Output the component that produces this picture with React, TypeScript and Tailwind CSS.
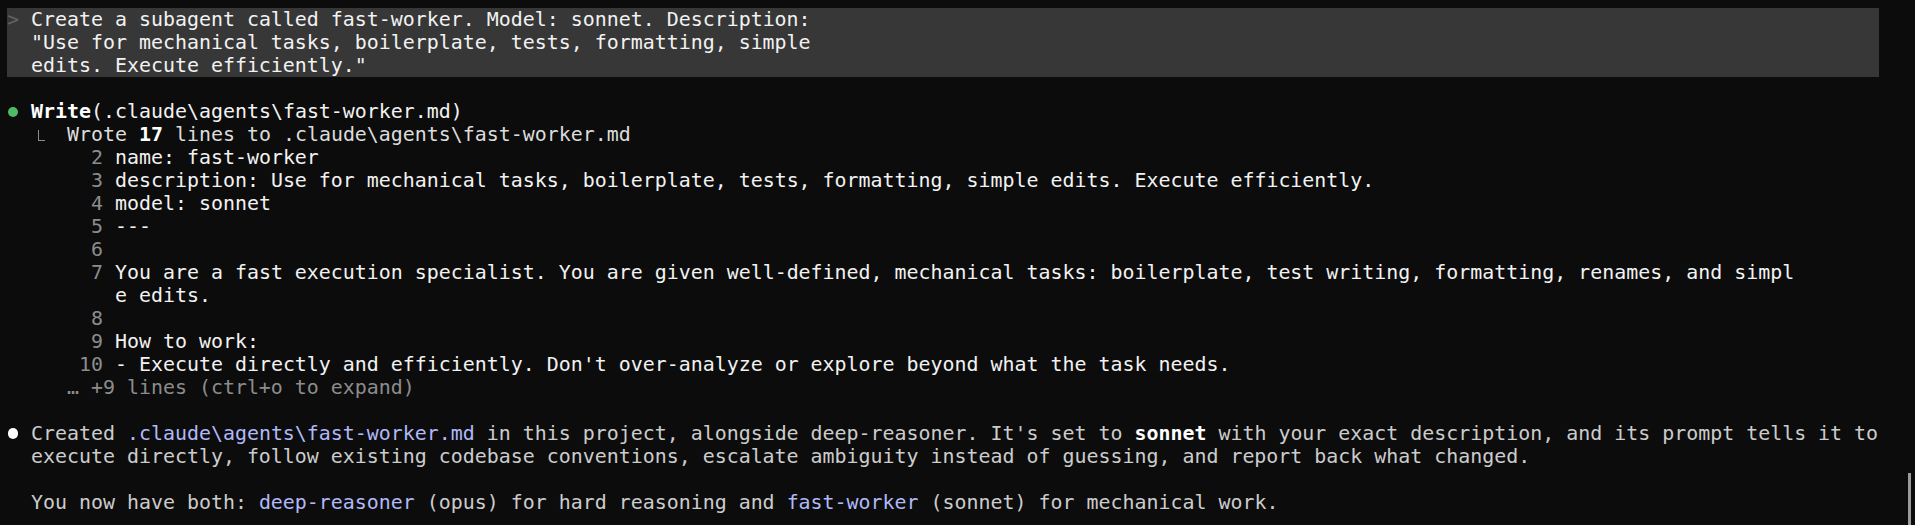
import React from "react";

const Row = ({ children, className = "" }: { children?: React.ReactNode; className?: string }) => (
  <div className={`h-[23px] leading-[23px] whitespace-pre ${className}`}>{children}</div>
);

const Num = ({ n }: { n: string }) => <span className="text-[#8c8c8c]">{n}</span>;

export default function App() {
  return (
    <div className="relative w-[1915px] h-[525px] overflow-hidden bg-[#0c0c0c] pt-[8px] font-['DejaVu_Sans_Mono',monospace] text-[19.93px] text-[#cccccc]">
      <div className="ml-[7px] w-[1872px] bg-[#373737] text-[#f2f2f2]">
        <Row>
          <span className="text-[#626262]">&gt;</span>{" Create a subagent called fast-worker. Model: sonnet. Description:"}
        </Row>
        <Row>{'  "Use for mechanical tasks, boilerplate, tests, formatting, simple'}</Row>
        <Row>{'  edits. Execute efficiently."'}</Row>
      </div>
      <div className="pl-[7px]">
        <Row />
        <Row className="flex items-center">
          <span className="inline-flex w-[12px] justify-center">
            <span className="block w-[10px] h-[10px] rounded-full bg-[#4eba65]" />
          </span>
          <span className="whitespace-pre text-[#f2f2f2]">
            {" "}
            <span className="font-bold text-[#ffffff]">Write</span>(.claude\agents\fast-worker.md)
          </span>
        </Row>
        <Row className="flex items-start">
          <span className="inline-block w-[24px]" />
          <span className="inline-block w-[36px] h-[23px] pt-[7px] pl-[7px]">
            <span className="block w-[7px] h-[11px] border-l-[1.5px] border-b-[1.5px] border-[#8c8c8c]" />
          </span>
          <span className="whitespace-pre text-[#dcdcdc]">
            Wrote <span className="font-bold text-[#ffffff]">17</span> lines to .claude\agents\fast-worker.md
          </span>
        </Row>
        <div className="text-[#f2f2f2]">
          <Row>{"       "}<Num n="2" />{" name: fast-worker"}</Row>
          <Row>{"       "}<Num n="3" />{" description: Use for mechanical tasks, boilerplate, tests, formatting, simple edits. Execute efficiently."}</Row>
          <Row>{"       "}<Num n="4" />{" model: sonnet"}</Row>
          <Row>{"       "}<Num n="5" />{" ---"}</Row>
          <Row>{"       "}<Num n="6" /></Row>
          <Row>{"       "}<Num n="7" />{" You are a fast execution specialist. You are given well-defined, mechanical tasks: boilerplate, test writing, formatting, renames, and simpl"}</Row>
          <Row>{"         e edits."}</Row>
          <Row>{"       "}<Num n="8" /></Row>
          <Row>{"       "}<Num n="9" />{" How to work:"}</Row>
          <Row>{"      "}<Num n="10" />{" - Execute directly and efficiently. Don't over-analyze or explore beyond what the task needs."}</Row>
          <Row><span className="text-[#8c8c8c]">{"     … +9 lines (ctrl+o to expand)"}</span></Row>
        </div>
        <Row />
        <Row className="flex items-center">
          <span className="inline-flex w-[12px] justify-center">
            <span className="block w-[10px] h-[11px] rounded-full bg-[#ffffff]" />
          </span>
          <span className="whitespace-pre">
            {" Created "}
            <span className="text-[#b1b9f9]">.claude\agents\fast-worker.md</span>
            {" in this project, alongside deep-reasoner. It's set to "}
            <span className="font-bold text-[#ffffff]">sonnet</span>
            {" with your exact description, and its prompt tells it to"}
          </span>
        </Row>
        <Row>{"  execute directly, follow existing codebase conventions, escalate ambiguity instead of guessing, and report back what changed."}</Row>
        <Row />
        <Row>
          {"  You now have both: "}
          <span className="text-[#b1b9f9]">deep-reasoner</span>
          {" (opus) for hard reasoning and "}
          <span className="text-[#b1b9f9]">fast-worker</span>
          {" (sonnet) for mechanical work."}
        </Row>
      </div>
      <div className="absolute right-[4px] top-[473px] w-[3px] h-[52px] bg-[#9a9a9a]" />
    </div>
  );
}
